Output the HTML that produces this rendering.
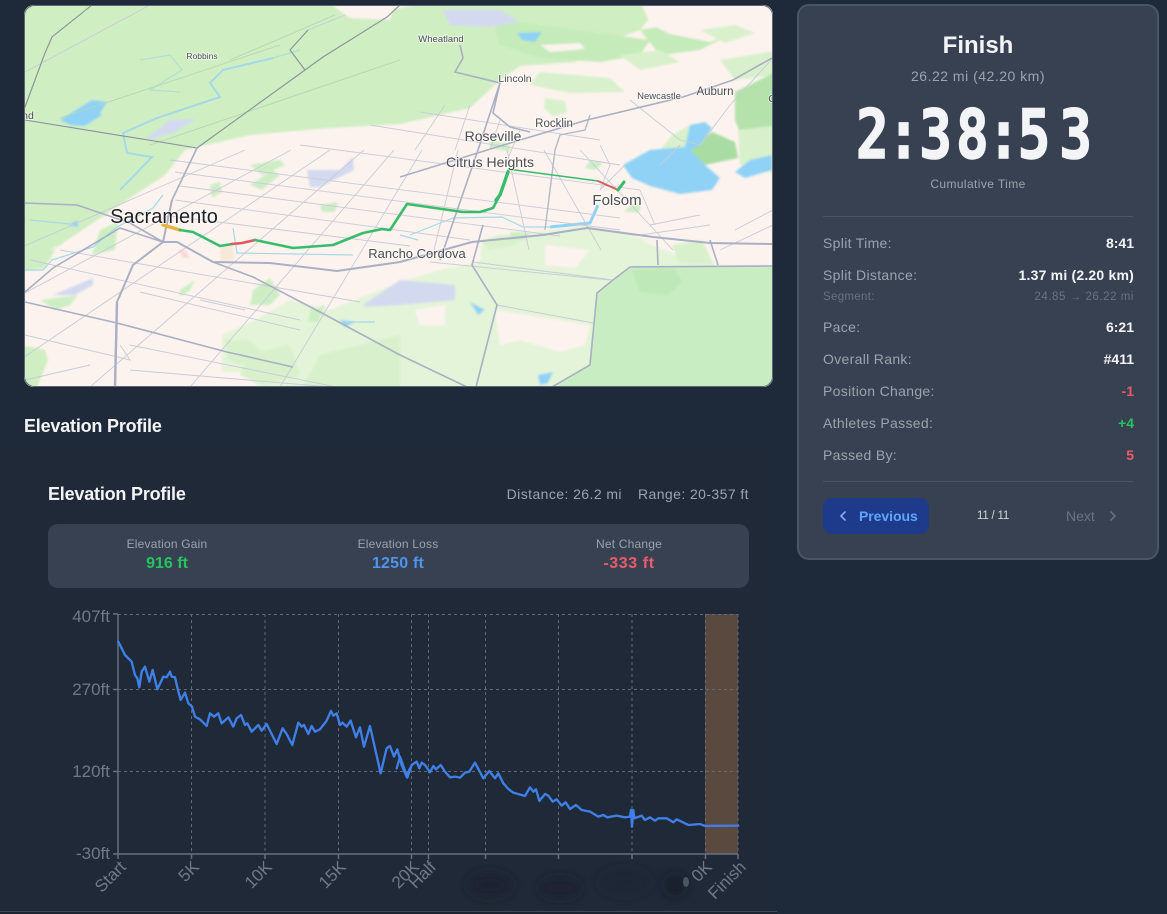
<!DOCTYPE html>
<html lang="en"><head><meta charset="utf-8"><title>Finish</title>
<style>
*{box-sizing:border-box;margin:0;padding:0}
html,body{width:1167px;height:914px;overflow:hidden;background:#1e2939;font-family:"Liberation Sans",sans-serif}
.abs{position:absolute;white-space:nowrap}
#panel{position:absolute;left:797px;top:4px;width:362px;height:556px;background:#374151;border:2px solid #4b5563;border-radius:12px}
.c{text-align:center;left:798px;width:360px}
.l{left:823px;font-size:14px;color:#9ca3af;line-height:20px;letter-spacing:.32px}
.r{right:33px;font-size:14px;font-weight:bold;color:#f3f4f6;line-height:20px}
.hr{position:absolute;left:823px;width:310px;height:1px;background:#4b5563}
.st{text-align:center;width:200px}
</style></head><body>
<div class="abs" style="left:0;top:450px;width:777px;height:461px;background:#1f2937"></div>
<svg class="abs" style="left:0;top:0" width="790" height="395" viewBox="0 0 790 395">
<defs><clipPath id="m"><rect x="24" y="5" width="749" height="382" rx="10"/></clipPath>
<filter id="s" x="-5%" y="-5%" width="110%" height="110%"><feGaussianBlur stdDeviation="1"/></filter></defs>
<g clip-path="url(#m)">
<rect x="24" y="5" width="749" height="382" fill="#fdf3ee"/>
<g filter="url(#s)">
<path fill="#cfeec2" d="M20 0H340L360 12 400 8 440 0H665L640 30 600 45 575 62 520 66 500 80 470 108 400 124 330 128 250 135 185 150 165 175 130 198 60 245 20 265Z"/>
<path fill="#c4ebb9" d="M500 20 590 32 650 40 640 55 600 62 540 58 500 45 495 30ZM640 30 700 20 735 32 700 50 660 55Z"/>
<path fill="#fdf3ee" d="M325 0H395L390 20 350 18ZM540 45l40-2 5 6-35 3ZM640 0h140v17l-70 25-40-8-20-10Z"/>
<path fill="#d8f1cc" d="M540 72 610 78 625 92 570 93 530 85ZM720 60 780 50V75L735 80ZM620 55 660 50 680 62 640 70ZM545 98l20 3 2 12-15 3-8-8ZM700 30l35-5 20 8-30 10Z"/>
<path fill="#b4e2aa" d="M735 92 780 70V150L745 145 735 120Z"/>
<path fill="#a8dca2" d="M688 150 712 132 735 142 738 158 700 166Z"/>
<path fill="#d8f1cc" d="M672 135 690 125 700 140 670 165 660 150ZM738 130 780 125V175L740 165Z"/>
<path fill="#e3f4d8" d="M262 392 245 372 222 372 222 335 255 320 290 300 330 310 400 282 440 270 480 262 482 240 585 225 650 240 780 255V392Z"/>
<path fill="#fdf3ee" d="M545 245 590 250 575 268 545 265ZM415 310 445 305 445 325 420 325ZM495 310 590 325 585 345 560 352 520 340 500 345ZM640 240 780 248V266L700 265 660 248Z"/>
<path fill="#c8edc2" d="M597 293 630 267 780 266V392H545L590 365Z"/>
<path fill="#bfe8b8" d="M632 270 675 268 682 282 668 295 640 292Z"/>
<path fill="#d8f1cc" d="M672 245l30-5 12 25-35-2ZM488 250 515 245 525 235 500 235 482 240ZM320 355 400 335 400 392H300Z"/>
<path fill="#cfeec2" d="M20 205 50 195 80 195 40 218 20 222ZM20 250 55 250 45 268 20 272ZM20 345 45 350 48 360 35 392H20Z"/>
<path fill="#cdeec4" d="M100 230 118 222 115 250 92 255ZM40 300 78 295 70 305 55 310ZM210 185 220 182 222 192 212 198ZM250 165 280 160 285 165 262 175ZM250 185 272 170 280 175 262 190ZM320 205 338 202 335 212 322 212ZM490 140 510 145 510 152 490 148ZM590 160 603 163 595 170 585 168ZM253 290 270 278 280 295 270 305 250 305ZM310 310 325 305 318 322 308 322ZM180 290 195 280 190 290 180 297ZM510 232 530 232 525 240 510 240ZM630 205 640 205 640 212 625 212Z"/>
<path fill="#d8f1cc" d="M225 340 250 340 265 355 240 365 228 360ZM248 355 290 345 300 375 265 385 240 375Z"/>
<path fill="#f8e8d8" d="M220 245 232 245 235 260 220 262Z"/>
<path fill="#fbd9d9" d="M178 250 185 250 190 258 183 258Z"/>
<path fill="#d3daf0" d="M147 138 170 120 196 119 175 132 150 140ZM307 170 340 170 353 157 354 170 320 187 310 187ZM443 10 500 10 520 22 490 27 450 25ZM53 295 93 278 93 285 75 295ZM363 305 400 280 455 285 455 300 400 305 365 307Z"/>
<path fill="#8fd2f5" d="M60 120 92 100 107 102 100 113 102 115 85 126 70 125ZM517 33 542 32 535 42 522 40ZM623 165 650 150 685 147 690 125 705 122 712 128 700 145 690 150 705 165 720 178 712 190 680 194 650 186 632 178ZM735 172 750 160 772 155 772 170 745 178ZM68 225 78 220 78 227ZM340 320 355 322 345 327ZM470 302 485 310 478 315ZM538 375 553 372 548 383 540 385Z"/>
</g>
<g fill="none" stroke="#a5d9e8" stroke-width="1.200">
<path stroke-width="2" d="M120 190 152 157 127 153 123 133 157 118 220 97 210 83 223 70 273 58"/>
<path stroke="#b5dfd5" d="M273 58 300 50M140 60 170 55 182 70 150 90 180 92"/>
<path d="M25 270H43L52 260 93 247 117 227 153 208 163 195M233 228 237 253 353 255M598 205 590 223 550 227 523 227 502 217 453 218 410 235M345 322 375 322M30 220 70 224M400 235 418 240"/>
<path stroke="#8fd2f5" stroke-width="3" d="M598 205 590 223 550 227"/>
</g>
<g fill="none" stroke="#c8cbd8" stroke-width=".9">
<path stroke="#b7d5b4" d="M60 118 190 75 280 45M230 60 335 15M150 145 400 60"/>
<path d="M245 150-300 387M291 150-150 387M330 150-20 387M364 150 90 387M394 150 190 387M422 150 280 387M458 150 434 250M507 150 529 250M544 150 601 250M580 150 673 250M445 105 415 150M470 105 455 150M500 120 490 150M520 130 505 165"/>
<path d="M170 160 620 218M175 172 620 230M180 186 560 236M175 200 470 240M170 216 410 246M300 145 640 190M370 125 620 165M420 112 600 140M30 260 300 320M60 250 360 302M25 380 90 365M25 335 130 360 120 345M130 345 400 400M140 292 300 330M200 300 245 310M130 370 330 387"/>
<path d="M25 72 150 5M290 50 308 30 345 15M430 262 610 280M497 305 593 323M473 262 613 280M657 245 658 265M640 190 655 225M600 145 610 165 600 190 625 165M630 100 680 140 700 145 730 105 773 58M680 145 660 165M720 250 773 225M650 225 700 215M735 230 773 210M640 235 710 225"/>
<path d="M590 115 585 130 560 135 555 150 545 230" stroke="#b4b9c9" stroke-width="1.400"/>
</g>
<g fill="none" stroke="#a9afc4" stroke-width="1.600">
<path stroke="#8b909c" stroke-width="1.100" d="M197 148 323 57 387 17 400 5M305 70 290 50 308 30M25 107 45 53 52 37 92 5M25 120 197 148"/>
<path d="M197 148 172 200M460 45 463 58 455 72 500 83 493 113 510 127 530 132M400 177 510 143 587 120 683 97 733 80 772 58M500 83 478 150 440 260"/>
<path d="M25 203 77 205 130 223 163 242M25 292 53 268 120 228 163 242M25 302 117 323 227 352 293 367M213 262 253 277 320 312 400 355 467 387M483 225 472 265 497 305 476 387M613 280 630 267 772 266M613 280 597 293 590 365 552 387M657 240 658 265M710 240 718 265"/>
<path stroke-width="2" d="M163 242 177 242 213 262 270 263 337 271 400 262 472 242 543 235 587 228 653 237 710 243 772 244M163 242 133 265 117 302 115 387M163 242 172 200"/>
<path stroke-width="2.400" d="M117 302 115 387"/>
</g>
<g fill="none" stroke-linecap="round" stroke-linejoin="round">
<path stroke="#e9b33e" stroke-width="3.500" d="M163 225 180 230"/>
<path stroke="#38bc6c" stroke-width="2.600" d="M180 230 193 232 220 246 232 244"/>
<path stroke="#db5b5f" stroke-width="2.600" d="M232 244 242 243 255 240"/>
<path stroke="#38bc6c" stroke-width="2.600" d="M255 240 293 248 333 245 363 233 382 229 390 230 407 204 463 212 480 212 493 208 500 195"/>
<path stroke="#38bc6c" stroke-width="3.400" d="M496 200 500 195 508 172"/>
<path stroke="#38bc6c" stroke-width="1.600" d="M508 170 515 170 598 181"/>
<path stroke="#db5b5f" stroke-width="1.800" d="M598 181 618 190"/>
<path stroke="#38bc6c" stroke-width="3" d="M618 190 624 182"/>
</g>
<g font-family="'Liberation Sans',sans-serif" text-anchor="middle" fill="#4a4d52" stroke="#fff" stroke-width="2" stroke-opacity=".55" paint-order="stroke">
<text x="441" y="42" font-size="9.500">Wheatland</text>
<text x="202" y="59" font-size="8.500">Robbins</text>
<text x="515" y="82" font-size="10.500">Lincoln</text>
<text x="659" y="99" font-size="9.500">Newcastle</text>
<text x="715" y="95" font-size="11.500">Auburn</text>
<text x="554" y="127" font-size="11.500">Rocklin</text>
<text x="493" y="141" font-size="14">Roseville</text>
<text x="490" y="167" font-size="14">Citrus Heights</text>
<text x="617" y="205" font-size="15">Folsom</text>
<text x="417" y="258" font-size="13">Rancho Cordova</text>
<text x="164" y="223" font-size="20" fill="#1d1f22">Sacramento</text>
<text x="28" y="119" font-size="10.500">nd</text>
<text x="772" y="102" font-size="10.500">C</text>
</g>
</g>
<rect x="24.500" y="5.500" width="748" height="381" rx="10" fill="none" stroke="#5c6675" stroke-width="1"/>
</svg>

<div class="abs" style="left:24px;top:415px;font-size:18px;font-weight:bold;color:#f3f4f6;line-height:22px;letter-spacing:-.2px">Elevation Profile</div>
<div class="abs" style="left:48px;top:483px;font-size:18px;font-weight:bold;color:#f3f4f6;line-height:22px;letter-spacing:-.2px">Elevation Profile</div>
<div class="abs" style="right:418px;top:484px;font-size:14px;color:#9ca3af;line-height:20px;letter-spacing:.42px">Distance: 26.2 mi<span style="margin-left:16px">Range: 20-357 ft</span></div>
<div class="abs" style="left:48px;top:524px;width:701px;height:64px;background:#374151;border-radius:10px"></div>
<div class="abs st" style="left:67px;top:536px;font-size:12px;line-height:16px;color:#9ca3af;letter-spacing:.2px">Elevation Gain</div>
<div class="abs st" style="left:298px;top:536px;font-size:12px;line-height:16px;color:#9ca3af;letter-spacing:.2px">Elevation Loss</div>
<div class="abs st" style="left:529px;top:536px;font-size:12px;line-height:16px;color:#9ca3af;letter-spacing:.2px">Net Change</div>
<div class="abs st" style="left:67px;top:555px;font-size:16px;font-weight:bold;line-height:18px;color:#22c55e">916 ft</div>
<div class="abs st" style="left:298px;top:555px;font-size:16px;font-weight:bold;line-height:18px;color:#4f94ee;letter-spacing:.2px">1250 ft</div>
<div class="abs st" style="left:529px;top:555px;font-size:16px;font-weight:bold;line-height:18px;color:#ef5a6a;letter-spacing:.6px">-333 ft</div>

<svg class="abs" style="left:0;top:600px" width="777" height="314" viewBox="0 600 777 314">
<defs><filter id="b" x="-50%" y="-50%" width="200%" height="200%"><feGaussianBlur stdDeviation="5"/></filter></defs>
<rect x="705" y="614" width="33" height="240" fill="#5a493e"/>
<g fill="none" stroke="#5f6977" stroke-width="1" stroke-dasharray="3 3">
<path d="M118 614.500H738M118 689.500H738M118 771.500H738"/>
<path d="M191.500 614V854M265 614V854M338.500 614V854M411.500 614V854M428.500 614V854M485.500 614V854M558.500 614V854M632 614V854M705.500 614V854M738 614V854"/>
</g>
<g fill="none" stroke="#667080" stroke-width="1.500">
<path d="M118 614V859M113 614H118M113 689.500H118M113 771.500H118M113 854H738"/>
<path d="M191.500 854V859M265 854V859M338.500 854V859M411.500 854V859M428.500 854V859M485.500 854V859M558.500 854V859M632 854V859M705.500 854V859M738 854V859"/>
</g>
<g fill="none" stroke="#3f80e8" stroke-width="7" stroke-linejoin="round" stroke-linecap="round">
<polyline transform="translate(40 600) scale(.3333)" points="235,125 245,145 255,165 275,185 285,225 292,235 298,262 305,215 315,200 328,245 338,210 352,268 370,230 380,232 390,215 395,230 405,232 412,262 422,300 435,278 445,310 456,320 465,350 480,358 500,378 510,340 522,350 535,340 545,370 565,352 580,380 590,355 603,345 615,375 622,370 635,395 655,375 665,392 680,372 710,432 728,385 740,402 757,435 775,368 785,380 792,375 805,402 815,378 825,395 840,388 850,375 860,362 873,333 880,347 890,340 900,375 908,368 920,380 932,362 948,412 960,382 972,440 990,378 1022,520 1040,445 1050,438 1062,470 1072,448 1085,495 1100,530 1110,505"/>
<polyline transform="translate(400 600) scale(.3333)" points="-10,505 0,470 22,533 35,495 50,485 58,505 65,488 75,495 90,517 100,498 108,508 122,495 135,515 150,532 165,530 180,533 195,518 208,515 225,488 250,535 268,513 285,535 295,520 310,550 325,567 340,578 375,588 390,562 400,575 408,568 418,603 435,582 445,587 458,605 470,598 485,617 497,607 510,627 528,615 545,630 570,635 595,650 610,645 622,652 650,647 675,652 690,650 693,630 696,680 700,630 703,655 725,647 735,660 750,652 765,662 775,655 800,655 820,667 830,658 865,675 900,672 915,678 1015,677"/>
</g>
<g font-family="'Liberation Sans',sans-serif" font-size="17" fill="#6f7988">
<text x="110" y="622" text-anchor="end">407ft</text>
<text x="110" y="695" text-anchor="end">270ft</text>
<text x="110" y="777" text-anchor="end">120ft</text>
<text x="110" y="859" text-anchor="end">-30ft</text>
<g text-anchor="end">
<text transform="translate(127 868) rotate(-45)">Start</text>
<text transform="translate(200 868) rotate(-45)">5K</text>
<text transform="translate(273 868) rotate(-45)">10K</text>
<text transform="translate(347 868) rotate(-45)">15K</text>
<text transform="translate(420 868) rotate(-45)">20K</text>
<text transform="translate(437 868) rotate(-45)">Half</text>
<text transform="translate(713 868) rotate(-45)">0K</text>
<text transform="translate(747 868) rotate(-45)">Finish</text>
</g>
</g>
<g filter="url(#b)">
<ellipse cx="490" cy="885" rx="22" ry="12" fill="#1a2433"/>
<ellipse cx="560" cy="888" rx="20" ry="10" fill="#1a2433"/>
<ellipse cx="625" cy="882" rx="25" ry="12" fill="#1c2636"/>
<ellipse cx="675" cy="885" rx="10" ry="10" fill="#171f2c"/>
</g>
<ellipse cx="686" cy="882" rx="3" ry="5" fill="#5f6977" opacity=".7"/>
<rect x="0" y="911" width="777" height="1" fill="#434a55"/>
<rect x="0" y="912" width="1167" height="2" fill="#1b2430"/>
</svg>

<div id="panel"></div>
<div class="abs c" style="top:32px;font-size:24px;font-weight:bold;color:#f3f4f6;line-height:28px">Finish</div>
<div class="abs c" style="top:66px;font-size:14px;color:#9ca3af;line-height:20px;letter-spacing:.5px">26.22 mi (42.20 km)</div>
<svg class="abs" style="left:798px;top:90px" width="360" height="85" viewBox="798 90 360 85">
<text transform="scale(.8 1)" y="158" x="1070 1109 1149 1195 1234 1272 1324" font-family="'DejaVu Sans Mono',monospace" font-weight="bold" font-size="68" fill="#f3f4f6" stroke="#f3f4f6" stroke-width="1.500">2:38:53</text>
</svg>
<div class="abs c" style="top:175px;font-size:12px;color:#9ca3af;line-height:18px;letter-spacing:.4px">Cumulative Time</div>
<div class="hr" style="top:216px"></div>
<div class="abs l" style="top:233px">Split Time:</div><div class="abs r" style="top:233px">8:41</div>
<div class="abs l" style="top:265px">Split Distance:</div><div class="abs r" style="top:265px;letter-spacing:.2px">1.37 mi (2.20 km)</div>
<div class="abs l" style="top:288px;font-size:11.500px;line-height:18px;color:#6b7280">Segment:</div><div class="abs r" style="top:288px;font-size:11.500px;line-height:18px;font-weight:normal;color:#6b7280;letter-spacing:.55px">24.85 → 26.22 mi</div>
<div class="abs l" style="top:317px">Pace:</div><div class="abs r" style="top:317px">6:21</div>
<div class="abs l" style="top:349px">Overall Rank:</div><div class="abs r" style="top:349px">#411</div>
<div class="abs l" style="top:381px">Position Change:</div><div class="abs r" style="top:381px;color:#ef5a6a">-1</div>
<div class="abs l" style="top:413px">Athletes Passed:</div><div class="abs r" style="top:413px;color:#22c55e">+4</div>
<div class="abs l" style="top:445px">Passed By:</div><div class="abs r" style="top:445px;color:#ef5a6a">5</div>
<div class="hr" style="top:481px"></div>
<div class="abs" style="left:823px;top:498px;width:106px;height:36px;background:#1e3a8a;border-radius:9px"></div>
<svg class="abs" style="left:836px;top:508px" width="14" height="16" viewBox="0 0 14 16"><path d="M9.500 3.500 5 8l4.500 4.500" fill="none" stroke="#8bb8f8" stroke-width="1.500"/></svg>
<div class="abs" style="left:859px;top:506px;font-size:14px;font-weight:bold;color:#60a5fa;line-height:20px;letter-spacing:-.05px">Previous</div>
<div class="abs" style="left:977px;top:507px;font-size:11.500px;color:#d1d5db;line-height:18px;letter-spacing:-.2px">11 / 11</div>
<div class="abs" style="left:1066px;top:506px;font-size:14px;color:#6b7280;line-height:20px">Next</div>
<svg class="abs" style="left:1106px;top:508px" width="14" height="16" viewBox="0 0 14 16"><path d="M4.500 3.500 9 8l-4.500 4.500" fill="none" stroke="#6b7280" stroke-width="1.500"/></svg>
</body></html>
